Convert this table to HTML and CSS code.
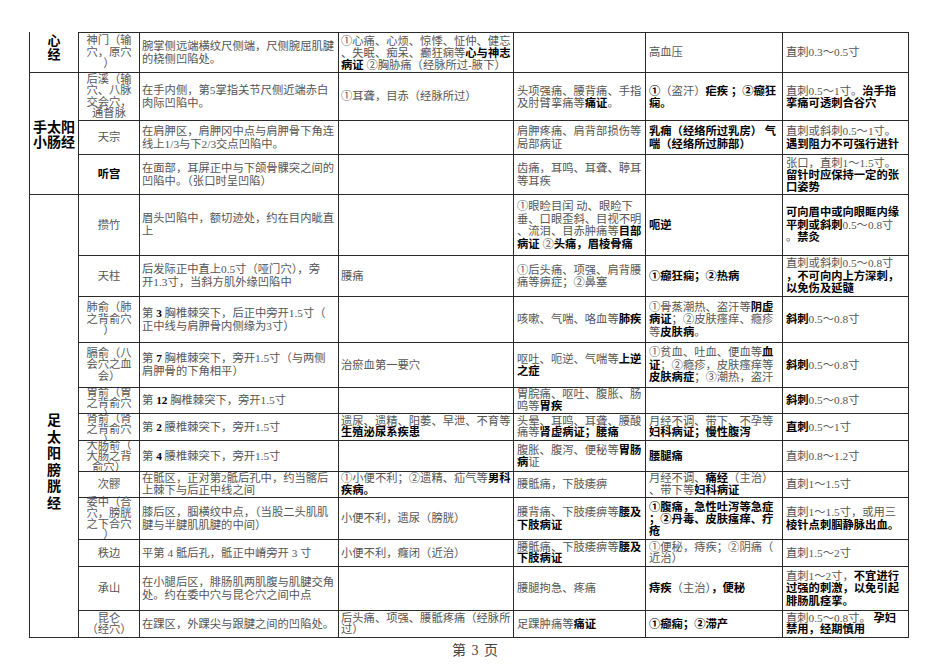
FILE: index.html
```html
<!DOCTYPE html>
<html lang="zh-CN">
<head>
<meta charset="utf-8">
<title>第 3 页</title>
<link rel="stylesheet" href="styles.css">
</head>
<body>
<div class="page">
  <div class="sheet">
    <!-- 神门 -->
    <div class="mer xin"><p>心<br>经</p></div>
    <div class="c name top l115"><p>神门（输<br>穴，原穴<br>）</p></div>
    <div class="c loc top"><p>腕掌侧远端横纹尺侧端，尺侧腕屈肌腱<br>的桡侧凹陷处。</p></div>
    <div class="c d4 top l12"><p>①心痛、心烦、惊悸、怔仲、健忘<br>、失眠、痴呆、癫狂痫等<b>心与神志</b><br><b>病证</b> ②胸胁痛（经脉所过-腋下）</p></div>
    <div class="c top"></div>
    <div class="c top"><p>高血压</p></div>
    <div class="c top"><p>直刺0.3～0.5寸</p></div>

    <!-- 后溪 -->
    <div class="mer xiao"><p>手太阳<br>小肠经</p></div>
    <div class="c name l115"><p>后溪（输<br>穴、八脉<br>交会穴，<br>通督脉</p></div>
    <div class="c loc"><p>在手内侧，第5掌指关节尺侧近端赤白<br>肉际凹陷中。</p></div>
    <div class="c d4"><p>①耳聋，目赤（经脉所过）</p></div>
    <div class="c l12"><p>头项强痛、腰背痛、手指<br>及肘臂挛痛等<b>痛证</b>。</p></div>
    <div class="c l12"><p><b>①</b>（盗汗）<b>疟疾 ；②癫狂</b><br><b>痫。</b></p></div>
    <div class="c l12"><p>直刺0.5～1寸。<b>治手指</b><br><b>挛痛可透刺合谷穴</b></p></div>

    <!-- 天宗 -->
    <div class="c name"><p>天宗</p></div>
    <div class="c loc"><p>在肩胛区，肩胛冈中点与肩胛骨下角连<br>线上1/3与下2/3交点凹陷中。</p></div>
    <div class="c d4"></div>
    <div class="c"><p>肩胛疼痛、肩背部损伤等<br>局部病证</p></div>
    <div class="c"><p><b>乳痈（经络所过乳房） 气</b><br><b>喘（经络所过肺部）</b></p></div>
    <div class="c"><p>直刺或斜刺0.5～1寸。<br><b>遇到阻力不可强行进针</b></p></div>

    <!-- 听宫 -->
    <div class="c name"><p><b>听宫</b></p></div>
    <div class="c loc"><p>在面部，耳屏正中与下颌骨髁突之间的<br>凹陷中。（张口时呈凹陷）</p></div>
    <div class="c d4"></div>
    <div class="c"><p>齿痛，耳鸣、耳聋、聤耳<br>等耳疾</p></div>
    <div class="c"></div>
    <div class="c l12"><p>张口，直刺1～1.5寸。<br><b>留针时应保持一定的张</b><br><b>口姿势</b></p></div>

    <!-- 攒竹 -->
    <div class="mer zu"><p>足<br>太<br>阳<br>膀<br>胱<br>经</p></div>
    <div class="c name"><p>攒竹</p></div>
    <div class="c loc"><p>眉头凹陷中，额切迹处，约在目内眦直<br>上</p></div>
    <div class="c d4"></div>
    <div class="c"><p>①眼睑目闰 动、眼睑下<br>垂、口眼歪斜、目视不明<br>、流泪、目赤肿痛等<b>目部</b><br><b>病证</b> ②<b>头痛，眉棱骨痛</b></p></div>
    <div class="c"><p><b>呃逆</b></p></div>
    <div class="c"><p><b>可向眉中或向眼眶内缘</b><br><b>平刺或斜刺</b>0.5～0.8寸<br>。<b>禁灸</b></p></div>

    <!-- 天柱 -->
    <div class="c name"><p>天柱</p></div>
    <div class="c loc"><p>后发际正中直上0.5寸（哑门穴），旁<br>开1.3寸，当斜方肌外缘凹陷中</p></div>
    <div class="c d4"><p>腰痛</p></div>
    <div class="c"><p>①后头痛、项强、肩背腰<br>痛等痹症；②鼻塞</p></div>
    <div class="c"><p><b>①癫狂痫；②热病</b></p></div>
    <div class="c"><p>直刺或斜刺0.5～0.8寸<br><b>，不可向内上方深刺，</b><br><b>以免伤及延髓</b></p></div>

    <!-- 肺俞 -->
    <div class="c name l115"><p>肺俞（肺<br>之背俞穴<br>）</p></div>
    <div class="c loc"><p>第 <b>3</b> 胸椎棘突下，后正中旁开1.5寸（<br>正中线与肩胛骨内侧缘为3寸）</p></div>
    <div class="c d4"></div>
    <div class="c"><p>咳嗽、气喘、咯血等<b>肺疾</b></p></div>
    <div class="c"><p>①骨蒸潮热、盗汗等<b>阴虚</b><br><b>病证</b>；②皮肤瘙痒、瘾疹<br>等<b>皮肤病</b>。</p></div>
    <div class="c"><p><b>斜刺</b>0.5～0.8寸</p></div>

    <!-- 膈俞 -->
    <div class="c name l115"><p>膈俞（八<br>会穴之血<br>会）</p></div>
    <div class="c loc"><p>第 <b>7</b> 胸椎棘突下，旁开1.5寸（与两侧<br>肩胛骨的下角相平）</p></div>
    <div class="c d4"><p>治瘀血第一要穴</p></div>
    <div class="c"><p>呕吐、呃逆、气喘等<b>上逆</b><br><b>之症</b></p></div>
    <div class="c"><p>①贫血、吐血、便血等<b>血</b><br><b>证</b>；②瘾疹，皮肤瘙痒等<br><b>皮肤病症</b>；③潮热，盗汗</p></div>
    <div class="c"><p><b>斜刺</b>0.5～0.8寸</p></div>

    <!-- 胃俞 -->
    <div class="c name clip"><p>胃俞（胃<br>之背俞穴<br>）</p></div>
    <div class="c loc"><p>第 <b>12</b> 胸椎棘突下，旁开1.5寸</p></div>
    <div class="c d4"></div>
    <div class="c l115"><p>胃脘痛、呕吐、腹胀、肠<br>鸣等<b>胃疾</b></p></div>
    <div class="c"></div>
    <div class="c"><p><b>斜刺</b>0.5～0.8寸</p></div>

    <!-- 肾俞 -->
    <div class="c name clip"><p>肾俞（肾<br>之背俞穴<br>）</p></div>
    <div class="c loc"><p>第 <b>2</b> 腰椎棘突下，旁开1.5寸</p></div>
    <div class="c d4 l115"><p>遗尿、遗精、阳萎、早泄、不育等<br><b>生殖泌尿系疾患</b></p></div>
    <div class="c l115"><p>头晕、耳鸣、耳聋、腰酸<br>痛等<b>肾虚病证；腰痛</b></p></div>
    <div class="c l115"><p>月经不调、带下、不孕等<br><b>妇科病证；慢性腹泻</b></p></div>
    <div class="c"><p><b>直刺</b>0.5～1寸</p></div>

    <!-- 大肠俞 -->
    <div class="c name clip"><p>大肠俞（<br>大肠之背<br>俞穴）</p></div>
    <div class="c loc"><p>第 <b>4</b> 腰椎棘突下，旁开1.5寸</p></div>
    <div class="c d4"></div>
    <div class="c l12"><p>腹胀、腹泻、便秘等<b>胃肠</b><br><b>病</b>证</p></div>
    <div class="c"><p><b>腰腿痛</b></p></div>
    <div class="c"><p>直刺0.8～1.2寸</p></div>

    <!-- 次髎 -->
    <div class="c name"><p>次髎</p></div>
    <div class="c loc l115"><p>在骶区，正对第2骶后孔中，约当髂后<br>上棘下与后正中线之间</p></div>
    <div class="c d4 l115"><p>①小便不利；②遗精、疝气等<b>男科</b><br><b>疾病。</b></p></div>
    <div class="c"><p>腰骶痛，下肢痿痹</p></div>
    <div class="c l115"><p>月经不调、<b>痛经</b>（主治）<br>、带下等<b>妇科病证</b></p></div>
    <div class="c"><p>直刺1～1.5寸</p></div>

    <!-- 委中 -->
    <div class="c name l105"><p>委中（合<br>穴，膀胱<br>之下合穴<br>）</p></div>
    <div class="c loc"><p>膝后区，腘横纹中点，（当股二头肌肌<br>腱与半腱肌肌腱的中间）</p></div>
    <div class="c d4"><p>小便不利，遗尿（膀胱）</p></div>
    <div class="c"><p>腰背痛、下肢痿痹等<b>腰及</b><br><b>下肢病证</b></p></div>
    <div class="c l12"><p><b>①腹痛，急性吐泻等急症</b><br><b>；②丹毒、皮肤瘙痒、疔</b><br><b>疮</b></p></div>
    <div class="c"><p>直刺1～1.5寸，或用三<br><b>棱针点刺腘静脉出血。</b></p></div>

    <!-- 秩边 -->
    <div class="c name"><p>秩边</p></div>
    <div class="c loc"><p>平第 4 骶后孔，骶正中嵴旁开 3 寸</p></div>
    <div class="c d4"><p>小便不利，癃闭（近治）</p></div>
    <div class="c l115"><p>腰骶痛、下肢痿痹等<b>腰及</b><br><b>下肢病证</b></p></div>
    <div class="c l115"><p>①便秘，痔疾；②阴痛（<br>近治）</p></div>
    <div class="c"><p>直刺1.5～2寸</p></div>

    <!-- 承山 -->
    <div class="c name"><p>承山</p></div>
    <div class="c loc"><p>在小腿后区，腓肠肌两肌腹与肌腱交角<br>处。约在委中穴与昆仑穴之间中点</p></div>
    <div class="c d4"></div>
    <div class="c"><p>腰腿拘急、疼痛</p></div>
    <div class="c"><p><b>痔疾</b>（主治）<b>，便秘</b></p></div>
    <div class="c"><p>直刺1～2寸，<b>不宜进行</b><br><b>过强的刺激，以免引起</b><br><b>腓肠肌痉挛。</b></p></div>

    <!-- 昆仑 -->
    <div class="c name l115"><p>昆仑<br>（经穴）</p></div>
    <div class="c loc"><p>在踝区，外踝尖与跟腱之间的凹陷处。</p></div>
    <div class="c d4 l115"><p>后头痛、项强、腰骶疼痛（经脉所<br>过）</p></div>
    <div class="c"><p>足踝肿痛等<b>痛证</b></p></div>
    <div class="c"><p><b>①癫痫；②滞产</b></p></div>
    <div class="c l115"><p>直刺0.5～0.8寸。 <b>孕妇</b><br><b>禁用，经期慎用</b></p></div>
  </div>
  <div class="foot">第 3 页</div>
</div>
</body>
</html>
```

FILE: styles.css
```css
* {
  box-sizing: border-box;
}

html,
body {
  margin: 0;
  padding: 0;
  background: #ffffff;
}

body {
  font-family: "Liberation Serif", "Noto Sans CJK SC", serif;
  color: #555555;
}

.page {
  width: 950px;
  height: 672px;
  padding-top: 32px;
  overflow: hidden;
}

.sheet {
  margin-left: 29px;
  width: 880px;
  display: grid;
  grid-template-columns: 49px 61px 199px 175px 132px 137px 126px;
  grid-template-rows: 41px 48px 34px 40px 61px 41px 46px 45px 26px 27px 31px 26px 42px 27px 44px 27px;
  border-left: 1px solid #2a2a2a;
}

.sheet p {
  margin: 0;
}

.c {
  display: flex;
  align-items: center;
  padding: 0 2px 0 3px;
  border-right: 1px solid #2a2a2a;
  border-bottom: 1px solid #2a2a2a;
  font-size: 11.3px;
  line-height: 12.5px;
  white-space: nowrap;
  min-width: 0;
}

.c.top {
  border-top: 1px solid #2a2a2a;
}

.c.name {
  justify-content: center;
  text-align: center;
  padding: 0;
}

.c.loc {
  padding-left: 2px;
  line-height: 12.8px;
}

.c.d4 {
  padding-left: 2px;
}

.c b {
  font-weight: 700;
  color: #000000;
}

.c.l105 { line-height: 10.6px; }
.c.l115 { line-height: 11.5px; }
.c.l12 { line-height: 12px; }

.c.clip {
  align-items: flex-start;
  overflow: hidden;
  line-height: 11px;
}

.c.clip p {
  margin-top: -1px;
}

.mer {
  grid-column: 1;
  display: flex;
  justify-content: center;
  text-align: center;
  border-right: 1px solid #2a2a2a;
  border-bottom: 1px solid #2a2a2a;
  font-family: "Noto Sans CJK SC", sans-serif;
  font-weight: 700;
  color: #000000;
  white-space: nowrap;
}

.mer.xin {
  grid-row: 1;
  align-items: flex-start;
  font-size: 13px;
  line-height: 13.5px;
  padding-top: 1px;
}

.mer.xiao {
  grid-row: 2 / span 3;
  align-items: center;
  font-size: 14px;
  line-height: 15px;
}

.mer.zu {
  grid-row: 5 / span 12;
  align-items: flex-start;
  font-size: 14px;
  line-height: 16.5px;
  padding-top: 216px;
}

.foot {
  margin-top: 5px;
  text-align: center;
  font-size: 14px;
  line-height: 16px;
  word-spacing: 2px;
  color: #444444;
}
```
